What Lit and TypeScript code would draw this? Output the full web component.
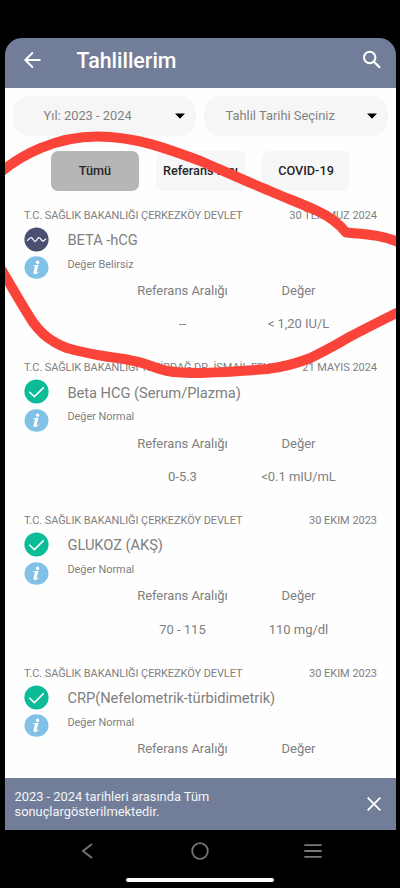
import { LitElement, html, css, svg } from "lit";
import { customElement, property } from "lit/decorators.js";

interface Result {
  place: string;
  date: string;
  name: string;
  status: string;
  kind: "wave" | "check";
  range?: string;
  value?: string;
}

const RESULTS: Result[] = [
  { place: "T.C. SAĞLIK BAKANLIĞI ÇERKEZKÖY DEVLET", date: "30 TEMMUZ 2024", name: "BETA -hCG", status: "Değer Belirsiz", kind: "wave", range: "--", value: "< 1,20 IU/L" },
  { place: "T.C. SAĞLIK BAKANLIĞI TEKİRDAĞ DR. İSMAİL FEHMİ", date: "21 MAYIS 2024", name: "Beta HCG (Serum/Plazma)", status: "Değer Normal", kind: "check", range: "0-5.3", value: "<0.1 mIU/mL" },
  { place: "T.C. SAĞLIK BAKANLIĞI ÇERKEZKÖY DEVLET", date: "30 EKIM 2023", name: "GLUKOZ (AKŞ)", status: "Değer Normal", kind: "check", range: "70 - 115", value: "110 mg/dl" },
  { place: "T.C. SAĞLIK BAKANLIĞI ÇERKEZKÖY DEVLET", date: "30 EKIM 2023", name: "CRP(Nefelometrik-türbidimetrik)", status: "Değer Normal", kind: "check" },
];

@customElement("result-item")
class ResultItem extends LitElement {
  @property({ attribute: false }) item!: Result;

  static styles = css`
    :host { display: block; height: 152.75px; flex: none; color: #808080; white-space: nowrap; }
    .top { display: flex; justify-content: space-between; height: 14px; line-height: 14px; padding: 0 18.5px 0 19.5px; font-size: 11px; }
    .place { letter-spacing: -0.08px; }
    .date { letter-spacing: -0.03px; }
    .main { display: flex; padding-left: 19px; margin-top: 4px; height: 53px; }
    .icons { width: 44px; display: flex; flex-direction: column; gap: 4.5px; }
    svg { display: block; }
    .name { font-size: 14.7px; line-height: 20px; margin-top: 3.3px; letter-spacing: -0.06px; }
    .status { font-size: 10.9px; line-height: 14px; margin-top: 7.7px; letter-spacing: -0.03px; }
    .grid { display: grid; grid-template-columns: 116px 116px; margin-left: 120px; text-align: center; font-size: 13px; line-height: 18px; row-gap: 15.5px; margin-top: 2.2px; letter-spacing: -0.03px; }
  `;

  render() {
    const r = this.item;
    return html`
      <div class="top"><span class="place">${r.place}</span><span class="date">${r.date}</span></div>
      <div class="main">
        <div class="icons">
          <svg width="25" height="25" viewBox="0 0 25 25">
            <circle cx="12.5" cy="12.5" r="12.1" fill=${r.kind === "wave" ? "#4a5070" : "#0cbc99"} />
            ${r.kind === "wave"
              ? svg`<path d="M3.3 13.4C4.6 13.5 5.2 10.6 7 10.6C9.4 10.6 9.3 14.4 11.2 14.4C13 14.4 12.8 10.6 15 10.6C17 10.6 17 14.2 19 14.2C20.2 14.2 20.4 12.5 21.7 12.1" fill="none" stroke="#fff" stroke-width="1.2" stroke-linecap="round"/>`
              : svg`<path d="M5.2 12.8L10.4 17.6L19.7 8.4" fill="none" stroke="#fff" stroke-width="1.5"/>`}
          </svg>
          <svg width="25" height="23" viewBox="0 0 25 23">
            <ellipse cx="12.5" cy="11.5" rx="12" ry="11.3" fill="#80c1e8" />
            <circle cx="13.6" cy="6.3" r="1.7" fill="#fff" />
            <path d="M9.4 9.2L14.5 8.8L12.5 16.3Q12.6 16.9 14.6 15.4L15 16Q12.6 18.4 10.6 18.1Q9 17.7 9.5 15.9L11 10.5Q10.9 9.9 9.3 10Z" fill="#fff" />
          </svg>
        </div>
        <div>
          <div class="name">${r.name}</div>
          <div class="status">${r.status}</div>
        </div>
      </div>
      <div class="grid">
        <span>Referans Aralığı</span><span>Değer</span>
        <span>${r.range ?? ""}</span><span>${r.value ?? ""}</span>
      </div>
    `;
  }
}

@customElement("app-root")
class AppRoot extends LitElement {
  static styles = css`
    :host { display: block; position: relative; width: 400px; height: 888px; background: #000; overflow: hidden; font-family: Roboto, sans-serif; }
    * { box-sizing: border-box; }
    svg { display: block; flex: none; }
    .phone { display: flex; flex-direction: column; height: 888px; padding: 38px 4.5px 0; white-space: nowrap; }
    .bar { height: 50px; flex: none; background: #727e99; border-radius: 17px 17px 0 0; display: flex; align-items: center; padding: 0 14px 6px 17.5px; }
    .title { flex: 1; margin-left: 32.5px; margin-top: 1px; color: #fff; font-size: 21.4px; font-weight: 500; }
    .body { height: 690px; flex: none; background: #fefefe; overflow: hidden; display: flex; flex-direction: column; }
    .selects { display: flex; gap: 8px; padding: 7.5px 8px 0; }
    .select { height: 40px; width: 183.5px; border-radius: 16px; background: #f6f6f6; color: #828282; font-size: 12.9px; display: flex; align-items: center; justify-content: space-between; padding: 0 11px 0 31px; }
    .select.date { padding-left: 21.5px; }
    .tabs { display: flex; gap: 16.5px; padding: 15.5px 0 0 46.5px; }
    .tab { width: 88px; height: 40px; border-radius: 7px; background: #f7f7f7; color: #262626; font-weight: 500; font-size: 12.7px; line-height: 39px; text-align: center; }
    .tab.wide { width: 90px; }
    .tab.on { background: #b6b6b6; }
    .list { margin-top: 17.7px; }
    .notice { height: 51.5px; flex: none; background: #727e99; color: #f4f5f8; display: flex; align-items: center; justify-content: space-between; padding: 0 14px 0 10px; font-size: 12.85px; line-height: 15px; }
    .nav { height: 44px; display: flex; align-items: center; justify-content: space-between; padding: 0 73px 1px 75px; }
    .nav .circle { margin-left: 1.5px; }
    .home { width: 148px; height: 3.5px; border-radius: 2px; background: #fff; margin: 4.5px auto 0; }
    .ink { position: absolute; left: 4.5px; top: 0; }
  `;

  render() {
    const arrow = html`<svg width="10" height="6" viewBox="0 0 10 6"><path d="M0 .5H10L5 5.8Z" fill="#000" /></svg>`;
    return html`
      <div class="phone">
        <div class="bar">
          <svg width="22" height="22" viewBox="0 0 22 22"><path d="M18.5 11H3.5M10.8 3.5L3.3 11L10.8 18.5" fill="none" stroke="#fff" stroke-width="1.9" /></svg>
          <div class="title">Tahlillerim</div>
          <svg width="20" height="20" viewBox="0 0 20 20"><circle cx="7.7" cy="7.5" r="5.7" fill="none" stroke="#fff" stroke-width="2" /><path d="M11.7 11.5L18 17.8" stroke="#fff" stroke-width="2.3" /></svg>
        </div>
        <div class="body">
          <div class="selects">
            <div class="select"><span>Yıl: 2023 - 2024</span>${arrow}</div>
            <div class="select date"><span>Tahlil Tarihi Seçiniz</span>${arrow}</div>
          </div>
          <div class="tabs">
            <div class="tab on">Tümü</div>
            <div class="tab wide">Referans Dışı</div>
            <div class="tab">COVID-19</div>
          </div>
          <div class="list">${RESULTS.map((r) => html`<result-item .item=${r}></result-item>`)}</div>
        </div>
        <div class="notice">
          <span>2023 - 2024 tarihleri arasında Tüm<br />sonuçlargösterilmektedir.</span>
          <svg width="16" height="16" viewBox="0 0 16 16"><path d="M1.7 1.7L14.3 14.3M14.3 1.7L1.7 14.3" stroke="#fff" stroke-width="1.9" /></svg>
        </div>
        <div class="nav">
          <svg width="16" height="18" viewBox="0 0 16 18"><path d="M12 2L3 9L12 16" fill="none" stroke="#777" stroke-width="1.8" /></svg>
          <svg class="circle" width="20" height="20" viewBox="0 0 20 20"><circle cx="10" cy="10" r="7.8" fill="none" stroke="#777" stroke-width="1.8" /></svg>
          <svg width="20" height="16" viewBox="0 0 20 16"><path d="M1.3 2.2H18.7M1.3 8H18.7M1.3 13.8H18.7" stroke="#777" stroke-width="1.8" /></svg>
        </div>
        <div class="home"></div>
      </div>
      <svg class="ink" width="391" height="888" viewBox="4.5 0 391 888">
        <g fill="none" stroke="#fb4439" stroke-width="10" stroke-linecap="round" stroke-linejoin="round">
          <path d="M-2 174C20 155 55 136.500 97 136.500C134 136.500 165 148 200 161C223 171 245 181 267 190C285 198 302 204 317 211C330 217 338 223 345.500 232.500C360 234 382 234 402 244" />
          <path d="M-2 265C8 281 20 303 33 323C39 331 45 337 53 341.500C66 350 83 352 100 355.500C113 358 121 358 133 361C146 363 156 369 167 371C178 373 188 373 200 373C225 372 245 371 267 369C283 367 297 363 310 358C322 352 334 346 347 338C362 330 380 321 402 310" />
        </g>
      </svg>
    `;
  }
}
